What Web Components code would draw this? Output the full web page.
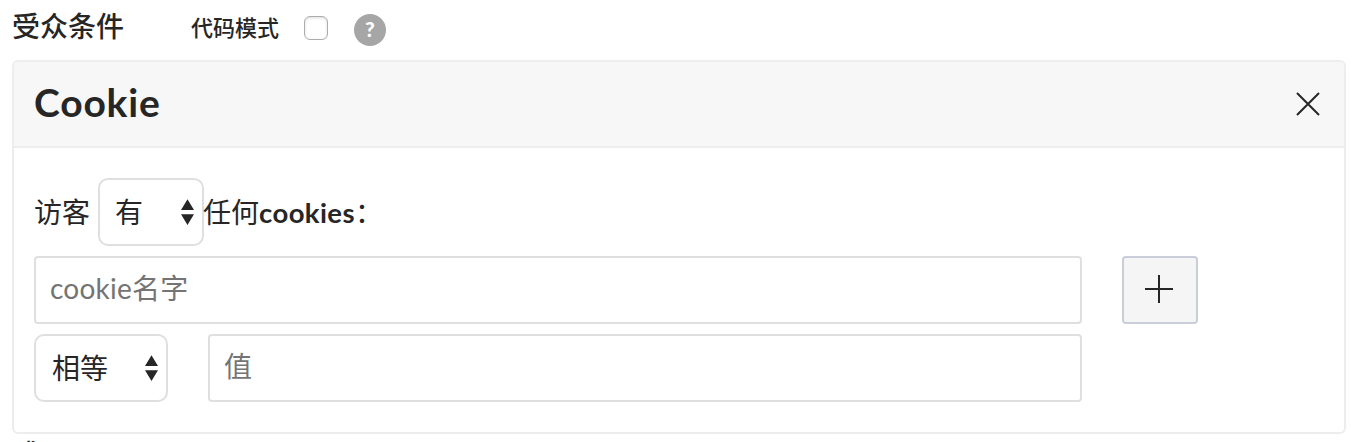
<!DOCTYPE html>
<html lang="zh-CN">
<head>
<meta charset="utf-8">
<title>受众条件</title>
<style>
    body {
        margin: 0;
        height: 442px;
        overflow: hidden;
        background: #fff;
        color: #262626;
        font-family: Lato, "Noto Sans CJK SC", sans-serif;
        font-size: 28px;
        line-height: 40px;
    }
</style>
</head>
<body>
<audience-editor></audience-editor>

<script>
class HelpTip extends HTMLElement {
    constructor() {
        super();
        this.attachShadow({ mode: 'open' });
    }

    connectedCallback() {
        this.shadowRoot.innerHTML = `
            <style>
                :host {
                    display: flex;
                    box-sizing: border-box;
                    align-items: center;
                    justify-content: center;
                    width: 32px;
                    height: 32px;
                    padding-bottom: 2px;
                    border-radius: 50%;
                    background: #a6a6a6;
                    color: #fff;
                    font: 900 21px/30px Lato, sans-serif;
                }
            </style>
            <span>?</span>
        `;
    }
}

class CheckBox extends HTMLElement {
    constructor() {
        super();
        this.attachShadow({ mode: 'open' });
    }

    connectedCallback() {
        this.shadowRoot.innerHTML = `
            <style>
                :host {
                    display: block;
                    box-sizing: border-box;
                    width: 24px;
                    height: 24px;
                    border: 1px solid #acacac;
                    border-radius: 6px;
                    background: #fff;
                    box-shadow: inset 0 1px 3px rgba(0, 0, 0, .14);
                }
            </style>
        `;
    }
}

class SelectBox extends HTMLElement {
    constructor() {
        super();
        this.attachShadow({ mode: 'open' });
    }

    connectedCallback() {
        this.shadowRoot.innerHTML = `
            <style>
                :host {
                    display: flex;
                    box-sizing: border-box;
                    align-items: center;
                    justify-content: space-between;
                    height: 68px;
                    padding: 0 7px 0 16px;
                    border: 2px solid #dfdfdf;
                    border-radius: 10px;
                    background: #fff;
                    color: #262626;
                }

                svg {
                    display: block;
                    fill: #262626;
                }
            </style>
            <span><slot></slot></span>
            <svg width="14" height="26" viewBox="0 0 14 26">
                <path d="M6.5 0.3 13 11H0zM0 15.2H13L6.5 25.9z"/>
            </svg>
        `;
    }
}

class TextField extends HTMLElement {
    constructor() {
        super();
        this.attachShadow({ mode: 'open' });
    }

    connectedCallback() {
        this.shadowRoot.innerHTML = `
            <style>
                :host {
                    display: flex;
                    box-sizing: border-box;
                    align-items: center;
                    height: 68px;
                    padding: 0 14px 4px;
                    border: 2px solid #dfdfdf;
                    border-radius: 4px;
                    background: #fff;
                    color: #747474;
                    letter-spacing: .25px;
                }
            </style>
            <span><slot></slot></span>
        `;
    }
}

class AddButton extends HTMLElement {
    constructor() {
        super();
        this.attachShadow({ mode: 'open' });
    }

    connectedCallback() {
        this.shadowRoot.innerHTML = `
            <style>
                :host {
                    display: flex;
                    box-sizing: border-box;
                    align-items: center;
                    justify-content: center;
                    width: 76px;
                    height: 68px;
                    padding: 0 2px 2px 0;
                    border: 2px solid #cacedb;
                    border-radius: 4px;
                    background: #f5f5f5;
                }
            </style>
            <svg width="28" height="28" viewBox="0 0 28 28" stroke="#262626" stroke-width="2">
                <path d="M14 0V28M0 14H28"/>
            </svg>
        `;
    }
}

class ConditionPanel extends HTMLElement {
    constructor() {
        super();
        this.attachShadow({ mode: 'open' });
    }

    connectedCallback() {
        this.shadowRoot.innerHTML = `
            <style>
                :host {
                    display: block;
                    border: 2px solid #ededed;
                    border-radius: 6px;
                    overflow: hidden;
                }

                header {
                    display: flex;
                    align-items: center;
                    justify-content: space-between;
                    height: 84px;
                    padding: 0 24px 0 20px;
                    border-bottom: 2px solid #ededed;
                    background: #f7f7f7;
                }

                h2 {
                    margin: 0;
                    padding-bottom: 5px;
                    font-size: 39px;
                    font-weight: 700;
                    letter-spacing: .8px;
                    line-height: 48px;
                }

                .body {
                    display: flex;
                    flex-direction: column;
                    gap: 10px;
                    padding: 30px 20px;
                }
            </style>
            <header>
                <h2>${this.getAttribute('heading')}</h2>
                <svg width="24" height="24" viewBox="0 0 24 24" stroke="#262626" stroke-width="2">
                    <path d="M1 1 23 23M23 1 1 23"/>
                </svg>
            </header>
            <div class="body"><slot></slot></div>
        `;
    }
}

class AudienceEditor extends HTMLElement {
    constructor() {
        super();
        this.attachShadow({ mode: 'open' });
    }

    connectedCallback() {
        this.shadowRoot.innerHTML = `
            <style>
                :host {
                    display: block;
                    padding: 0 14px 0 12px;
                }

                .top {
                    display: flex;
                    height: 60px;
                }

                h1 {
                    width: 180px;
                    margin: 6px 0 0;
                    font-size: 28px;
                    font-weight: 500;
                    line-height: 40px;
                }

                .mode {
                    width: 113px;
                    margin: 12px 0 0 -1px;
                    font-size: 22px;
                    font-weight: 500;
                    line-height: 32px;
                }

                check-box { margin-top: 16px; }
                help-tip { margin: 14px 0 0 26px; }

                .row { display: flex; }

                .sentence {
                    align-items: center;
                    height: 68px;
                }

                .sentence select-box {
                    width: 106px;
                    margin: 0 -1px 0 8px;
                    padding-left: 15px;
                }

                b {
                    font-size: 27.5px;
                    font-weight: 700;
                    letter-spacing: .4px;
                }

                .name { width: 1048px; }
                add-button { margin-left: 40px; }
                .operator { width: 134px; }

                .value {
                    width: 874px;
                    margin-left: 40px;
                }

                .joiner { margin-top: 0; }
            </style>
            <div class="top">
                <h1>受众条件</h1>
                <span class="mode">代码模式</span>
                <check-box></check-box>
                <help-tip></help-tip>
            </div>
            <condition-panel heading="Cookie">
                <div class="row sentence">
                    <span>访客</span>
                    <select-box>有</select-box>
                    <span>任何<b>cookies</b>：</span>
                </div>
                <div class="row">
                    <text-field class="name">cookie名字</text-field>
                    <add-button></add-button>
                </div>
                <div class="row">
                    <select-box class="operator">相等</select-box>
                    <text-field class="value">值</text-field>
                </div>
            </condition-panel>
            <div class="joiner">或</div>
        `;
    }
}

customElements.define('help-tip', HelpTip);
customElements.define('check-box', CheckBox);
customElements.define('select-box', SelectBox);
customElements.define('text-field', TextField);
customElements.define('add-button', AddButton);
customElements.define('condition-panel', ConditionPanel);
customElements.define('audience-editor', AudienceEditor);
</script>
</body>
</html>
